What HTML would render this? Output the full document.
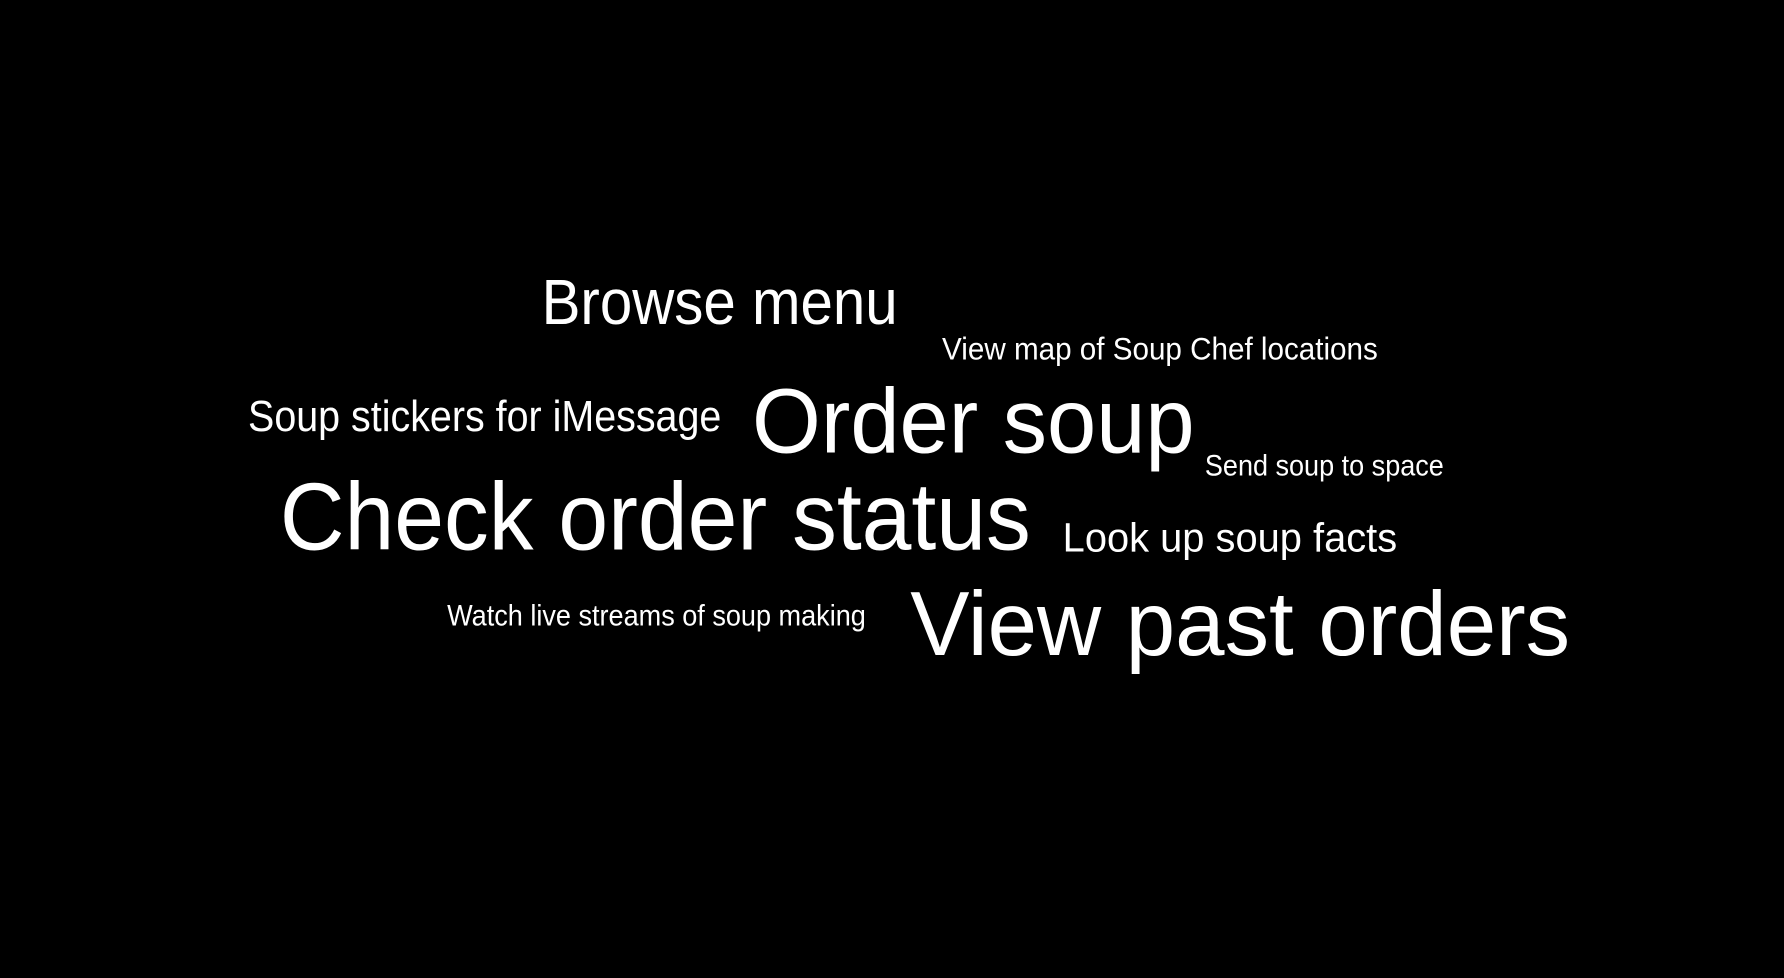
<!DOCTYPE html>
<html><head><meta charset="utf-8"><style>
html,body{margin:0;padding:0;background:#000;width:1784px;height:978px;overflow:hidden}
svg{display:block}
text{fill:#fff;font-family:"Liberation Sans",sans-serif}
</style></head><body>
<svg width="1784" height="978" viewBox="0 0 1568 860" preserveAspectRatio="none">
<rect width="1568" height="860" fill="#000"/>
<text x="476" y="285" font-size="56" textLength="313" lengthAdjust="spacingAndGlyphs">Browse menu</text>
<text x="828" y="316" font-size="27.5" textLength="383" lengthAdjust="spacingAndGlyphs">View map of Soup Chef locations</text>
<text x="218" y="379" font-size="38.5" textLength="416" lengthAdjust="spacingAndGlyphs">Soup stickers for iMessage</text>
<text x="661" y="398" font-size="81" textLength="389" lengthAdjust="spacingAndGlyphs">Order soup</text>
<text x="1059" y="418" font-size="26" textLength="210" lengthAdjust="spacingAndGlyphs">Send soup to space</text>
<text x="246" y="483" font-size="84" textLength="660" lengthAdjust="spacingAndGlyphs">Check order status</text>
<text x="934" y="485" font-size="36" textLength="294" lengthAdjust="spacingAndGlyphs">Look up soup facts</text>
<text x="393" y="550" font-size="26" textLength="368" lengthAdjust="spacingAndGlyphs">Watch live streams of soup making</text>
<text x="800" y="576" font-size="80" textLength="580" lengthAdjust="spacingAndGlyphs">View past orders</text>
</svg>
</body></html>
